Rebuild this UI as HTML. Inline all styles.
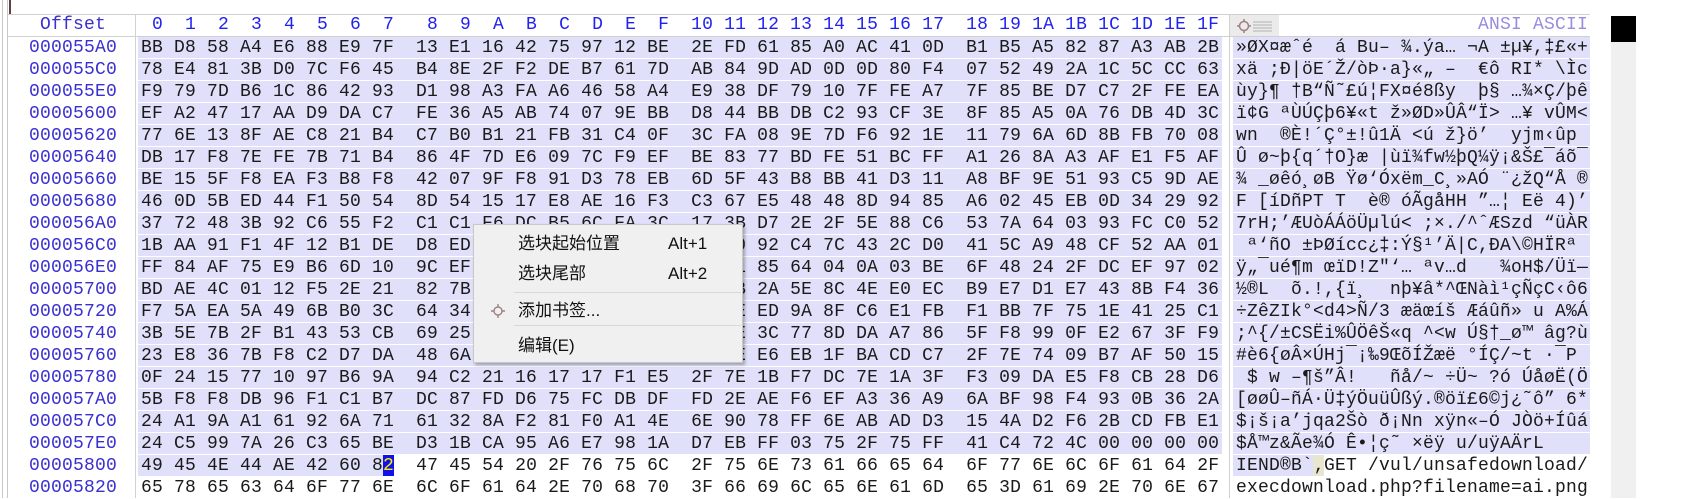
<!DOCTYPE html>
<html><head><meta charset="utf-8">
<style>
*{margin:0;padding:0;box-sizing:border-box}
body{width:1690px;height:498px;overflow:hidden;background:#fff;position:relative;font-family:"Liberation Mono",monospace}
.m{position:absolute;font-family:"Liberation Mono",monospace;font-size:18px;letter-spacing:0.2px;white-space:pre;line-height:21px}
.band{position:absolute;background:#e0e0fa;height:21px}
.off{position:absolute;left:29px;color:#3a2fd0;font-size:18px;letter-spacing:0.2px;white-space:pre;line-height:21px;font-family:"Liberation Mono",monospace}
.hx{left:141px;color:#1a1a1a}
.as{left:1236px;color:#1a1a1a}
.menu{position:absolute;left:473px;top:224px;width:270px;height:139px;background:#f0f0f0;border:1px solid #c8c8c8;box-shadow:2px 2px 3px rgba(0,0,0,.3);font-family:"Liberation Sans","Noto Sans CJK SC",sans-serif;font-size:17px;color:#111}
.mi{position:absolute;left:44px;line-height:22px;white-space:pre}
.sc{position:absolute;left:194px;line-height:22px}
.sep{position:absolute;left:40px;width:227px;height:1px;background:#d8d8d8}
</style></head><body>
<div style="position:absolute;left:2px;top:0;width:1px;height:498px;background:#c8c8c8"></div>
<div style="position:absolute;left:7px;top:0;width:1px;height:498px;background:#c8c8c8"></div>
<div style="position:absolute;left:9px;top:0;width:2px;height:14px;background:#604040"></div>
<div style="position:absolute;left:8px;top:14px;width:1582px;height:1px;background:#d0d0d0"></div>
<div style="position:absolute;left:8px;top:36px;width:1582px;height:1px;background:#d0d0d0"></div>
<div style="position:absolute;left:135px;top:15px;width:1px;height:483px;background:#d0d0d0"></div>
<div style="position:absolute;left:1229px;top:15px;width:1px;height:483px;background:#d0d0d0"></div>
<div class="off" style="left:40px;top:15px;color:#3a2fd0">Offset</div>
<div class="m" style="left:141px;top:15px;color:#2222ee"> 0  1  2  3  4  5  6  7   8  9  A  B  C  D  E  F  10 11 12 13 14 15 16 17  18 19 1A 1B 1C 1D 1E 1F</div>
<div style="position:absolute;left:1230px;top:15px;width:49px;height:21px;background:#ebebeb"></div>
<svg style="position:absolute;left:1236px;top:17px" width="40" height="18" viewBox="0 0 40 18"><circle cx="8" cy="9" r="4.5" fill="none" stroke="#a08080" stroke-width="1.5"/><path d="M8 2v3M8 13v3M1 9h3M12 9h3" stroke="#a08080" stroke-width="1.5"/><path d="M17 5h19M17 8h19M17 11h19M17 14h19" stroke="#b0b0b0" stroke-width="1"/></svg>
<div class="m" style="left:1478px;top:15px;color:#9a8ae0">ANSI ASCII</div>
<div style="position:absolute;left:1611px;top:16px;width:25px;height:26px;background:#000"></div>
<div style="position:absolute;left:1611px;top:42px;width:25px;height:456px;background:#f0f0f0"></div>

<div class="band" style="left:138px;top:37px;width:1084px;height:418px;background:repeating-linear-gradient(#e0e0fa 0 21px,#fff 21px 22px)"></div>
<div class="band" style="left:1233px;top:37px;width:357px;height:418px;background:repeating-linear-gradient(#e0e0fa 0 21px,#fff 21px 22px)"></div>
<div class="band" style="left:138px;top:455px;width:245px"></div>
<div style="position:absolute;left:383px;top:455px;width:11px;height:21px;background:#1010e8"></div>
<div class="band" style="left:1233px;top:455px;width:80px"></div>
<div style="position:absolute;left:1313px;top:455px;width:11px;height:21px;background:#e8e6d0"></div>

<div class="off" style="top:37px;line-height:22px">000055A0
000055C0
000055E0
00005600
00005620
00005640
00005660
00005680
000056A0
000056C0
000056E0
00005700
00005720
00005740
00005760
00005780
000057A0
000057C0
000057E0
00005800
00005820</div>

<div class="m hx" style="top:37px;line-height:22px">BB D8 58 A4 E6 88 E9 7F  13 E1 16 42 75 97 12 BE  2E FD 61 85 A0 AC 41 0D  B1 B5 A5 82 87 A3 AB 2B
78 E4 81 3B D0 7C F6 45  B4 8E 2F F2 DE B7 61 7D  AB 84 9D AD 0D 0D 80 F4  07 52 49 2A 1C 5C CC 63
F9 79 7D B6 1C 86 42 93  D1 98 A3 FA A6 46 58 A4  E9 38 DF 79 10 7F FE A7  7F 85 BE D7 C7 2F FE EA
EF A2 47 17 AA D9 DA C7  FE 36 A5 AB 74 07 9E BB  D8 44 BB DB C2 93 CF 3E  8F 85 A5 0A 76 DB 4D 3C
77 6E 13 8F AE C8 21 B4  C7 B0 B1 21 FB 31 C4 0F  3C FA 08 9E 7D F6 92 1E  11 79 6A 6D 8B FB 70 08
DB 17 F8 7E FE 7B 71 B4  86 4F 7D E6 09 7C F9 EF  BE 83 77 BD FE 51 BC FF  A1 26 8A A3 AF E1 F5 AF
BE 15 5F F8 EA F3 B8 F8  42 07 9F F8 91 D3 78 EB  6D 5F 43 B8 BB 41 D3 11  A8 BF 9E 51 93 C5 9D AE
46 0D 5B ED 44 F1 50 54  8D 54 15 17 E8 AE 16 F3  C3 67 E5 48 48 8D 94 85  A6 02 45 EB 0D 34 29 92
37 72 48 3B 92 C6 55 F2  C1 C1 F6 DC B5 6C FA 3C  17 3B D7 2E 2F 5E 88 C6  53 7A 64 03 93 FC C0 52
1B AA 91 F1 4F 12 B1 DE  D8 ED 5A 3E 8C 71 2F 09  33 E0 92 C4 7C 43 2C D0  41 5C A9 48 CF 52 AA 01
FF 84 AF 75 E9 B6 6D 10  9C EF 22 55 E8 3F 12 B6  3A 11 85 64 04 0A 03 BE  6F 48 24 2F DC EF 97 02
BD AE 4C 01 12 F5 2E 21  82 7B 11 9E 2C 6C 30 A2  5D 0B 2A 5E 8C 4E E0 EC  B9 E7 D1 E7 43 8B F4 36
F7 5A EA 5A 49 6B B0 3C  64 34 3E D1 2F 33 20 E6  4C 9E ED 9A 8F C6 E1 FB  F1 BB 7F 75 1E 41 25 C1
3B 5E 7B 2F B1 43 53 CB  69 25 DB D6 EA 8A AB 71  20 5E 3C 77 8D DA A7 86  5F F8 99 0F E2 67 3F F9
23 E8 36 7B F8 C2 D7 DA  48 6A AF A1 89 39 8C F5  CD 8E E6 EB 1F BA CD C7  2F 7E 74 09 B7 AF 50 15
0F 24 15 77 10 97 B6 9A  94 C2 21 16 17 17 F1 E5  2F 7E 1B F7 DC 7E 1A 3F  F3 09 DA E5 F8 CB 28 D6
5B F8 F8 DB 96 F1 C1 B7  DC 87 FD D6 75 FC DB DF  FD 2E AE F6 EF A3 36 A9  6A BF 98 F4 93 0B 36 2A
24 A1 9A A1 61 92 6A 71  61 32 8A F2 81 F0 A1 4E  6E 90 78 FF 6E AB AD D3  15 4A D2 F6 2B CD FB E1
24 C5 99 7A 26 C3 65 BE  D3 1B CA 95 A6 E7 98 1A  D7 EB FF 03 75 2F 75 FF  41 C4 72 4C 00 00 00 00
49 45 4E 44 AE 42 60 8<span style="color:#ffee00">2</span>  47 45 54 20 2F 76 75 6C  2F 75 6E 73 61 66 65 64  6F 77 6E 6C 6F 61 64 2F
65 78 65 63 64 6F 77 6E  6C 6F 61 64 2E 70 68 70  3F 66 69 6C 65 6E 61 6D  65 3D 61 69 2E 70 6E 67</div>

<div class="m as" style="top:37px;line-height:22px">»ØX¤æˆé  á Bu– ¾.ýa… ¬A ±µ¥,‡£«+
xä ;Ð|öE´Ž/òÞ·a}«„ –  €ô RI* \Ìc
ùy}¶ †B“Ñ˜£ú¦FX¤é8ßy  þ§ …¾×Ç/þê
ï¢G ªÙÚÇþ6¥«t ž»ØD»ÛÂ“Ï&gt; …¥ vÛM&lt;
wn  ®È!´Ç°±!û1Ä &lt;ú ž}ö’  yjm‹ûp 
Û ø~þ{q´†O}æ |ùï¾fw½þQ¼ÿ¡&amp;Š£¯áõ¯
¾ _øêó¸øB Ÿø‘Óxëm_C¸»AÓ ¨¿žQ“Å ®
F [íDñPT T  è® óÃgåHH ”…¦ Eë 4)’
7rH;’ÆUòÁÁöÜµlú&lt; ;×./^ˆÆSzd “üÀR
 ª‘ñO ±ÞØícc¿‡:Ý§¹’Ä|C,ÐA\©HÏRª
ÿ„¯ué¶m œïD!Z"‘… ªv…d   ¾oH$/Üï—
½®L  õ.!,{ï¸  nþ¥â*^ŒNàì¹çÑçC‹ô6
÷ZêZIk°&lt;d4&gt;Ñ/3 æäœíš Æáûñ» u A%Á
;^{/±CSËi%ÛÖêŠ«q ^&lt;w Ú§†_ø™ âg?ù
#è6{øÂ×ÚHj¯¡‰9ŒõÍŽæë °ÍÇ/~t ·¯P 
 $ w –¶š”Â!   ñå/~ ÷Ü~ ?ó ÚåøË(Ö
[øøÛ–ñÁ·Ü‡ýÖuüÛßý.®öï£6©j¿˜ô” 6*
$¡š¡a’jqa2Šò ð¡Nn xÿn«–Ó JÒö+Íûá
$Å™z&amp;Ãe¾Ó Ê•¦ç˜ ×ëÿ u/uÿAÄrL    
IEND®B`‚GET /vul/unsafedownload/
execdownload.php?filename=ai.png</div>

<div class="menu">
<div class="mi" style="top:8px">选块起始位置</div><div class="sc" style="top:8px">Alt+1</div>
<div class="mi" style="top:38px">选块尾部</div><div class="sc" style="top:38px">Alt+2</div>
<div class="sep" style="top:67px"></div>
<svg style="position:absolute;left:17px;top:79px" width="14" height="14" viewBox="0 0 14 14"><circle cx="7" cy="7" r="4" fill="none" stroke="#a08080" stroke-width="1.4"/><path d="M7 0v3M7 11v3M0 7h3M11 7h3" stroke="#a08080" stroke-width="1.4"/></svg>
<div class="mi" style="top:75px">添加书签...</div>
<div class="sep" style="top:100px"></div>
<div class="mi" style="top:110px">编辑(E)</div>
</div>
</body></html>
